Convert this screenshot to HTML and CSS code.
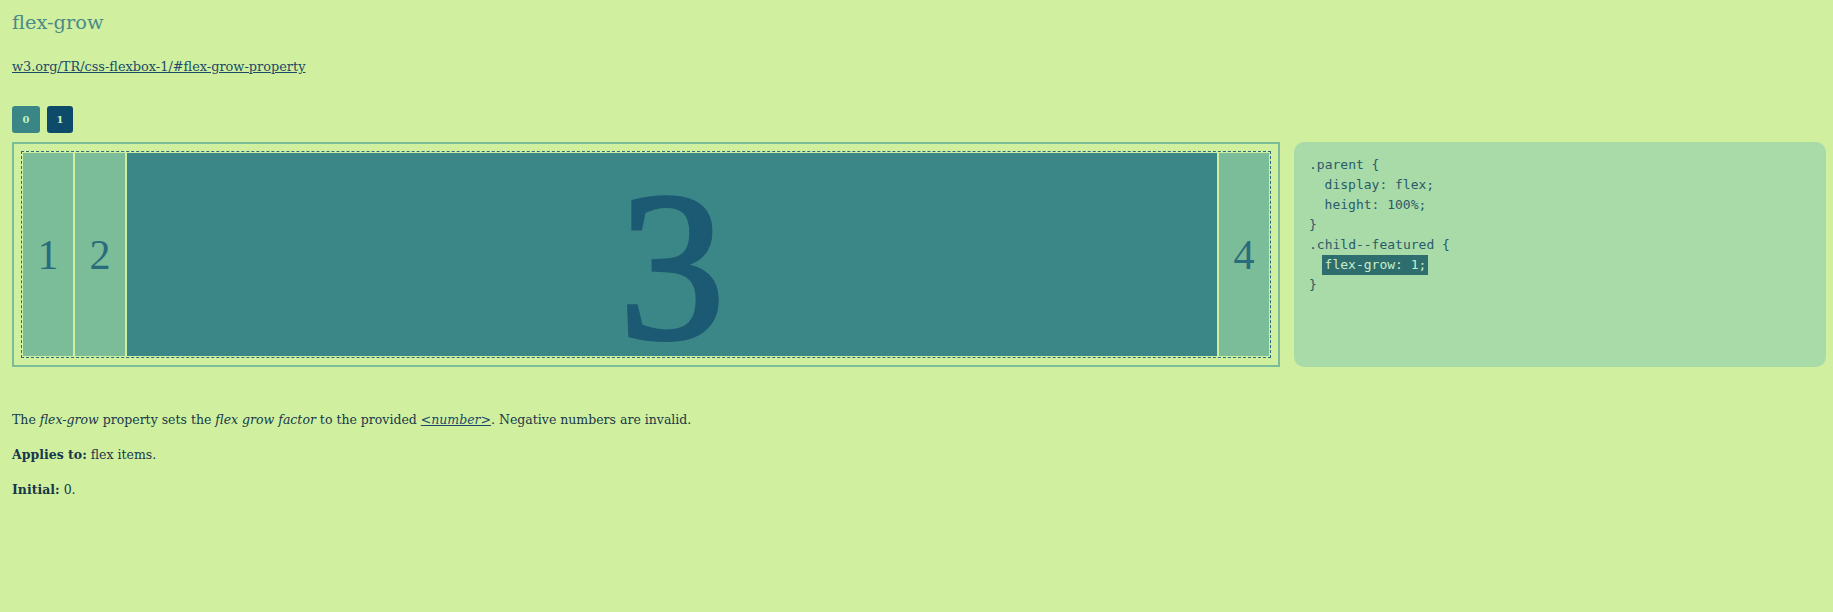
FILE: index.html
```html
<!DOCTYPE html>
<html lang="en">
<head>
<meta charset="utf-8">
<title>flex-grow</title>
<link rel="stylesheet" href="styles.css">
</head>
<body>
<h1 class="title">flex-grow</h1>
<p class="spec"><a href="#">w3.org/TR/css-flexbox-1/#flex-grow-property</a></p>
<div class="buttons">
  <button class="btn btn-off">0</button>
  <button class="btn btn-on">1</button>
</div>
<div class="row">
  <div class="demo">
    <div class="parent">
      <div class="child"><span class="num">1</span></div>
      <div class="child"><span class="num">2</span></div>
      <div class="child child--featured"><span class="num num-big">3</span></div>
      <div class="child"><span class="num">4</span></div>
    </div>
  </div>
  <div class="code">
    <div class="line">.parent {</div>
    <div class="line indent">display: flex;</div>
    <div class="line indent">height: 100%;</div>
    <div class="line">}</div>
    <div class="line">.child--featured {</div>
    <div class="line indent"><span class="hl">flex-grow: 1;</span></div>
    <div class="line">}</div>
  </div>
</div>
<p class="desc desc-first">The <em>flex-grow</em> property sets the <em>flex grow factor</em> to the provided <a href="#"><em>&lt;number&gt;</em></a>. Negative numbers are invalid.</p>
<p class="desc"><strong>Applies to:</strong> flex items.</p>
<p class="desc"><strong>Initial:</strong> 0.</p>
</body>
</html>
```

FILE: styles.css
```css
html, body {
  margin: 0;
  background: #d0f0a0;
}
body {
  padding: 0 7px 0 12px;
  font-family: "DejaVu Serif", "Liberation Serif", serif;
  color: #17384a;
}
.title {
  margin: 9px 0 0;
  font-size: 19.4px;
  line-height: 28px;
  font-weight: normal;
  color: #4a8a88;
}
.spec {
  margin: 20px 0 0;
  font-size: 12.9px;
  line-height: 20px;
}
a {
  color: #1b4a68;
}
.buttons {
  margin-top: 29px;
  display: flex;
  gap: 7px;
}
.btn {
  width: 28px;
  height: 27px;
  border: 0;
  border-radius: 3px;
  font-family: "DejaVu Serif", serif;
  font-size: 10px;
  font-weight: bold;
  color: #c8f0c0;
  padding: 0;
}
.btn-off { background: #3a8585; }
.btn-on { background: #0e4a6a; width: 26px; }
.row {
  margin-top: 9px;
  display: flex;
  gap: 14px;
  height: 225px;
}
.demo {
  flex: 1;
  box-sizing: border-box;
  border: 2px solid #7bbd98;
  padding: 7px;
}
.parent {
  display: flex;
  height: 100%;
  box-sizing: border-box;
  border: 1px dashed #2a6b7c;
}
.child {
  width: 50px;
  margin: 1px;
  background: #7bbd98;
  display: flex;
  align-items: center;
  justify-content: center;
}
.child--featured {
  flex-grow: 1;
  background: #3b8686;
}
.num {
  font-family: "Liberation Serif", serif;
  font-size: 42px;
  line-height: 1;
  color: #2a6b7c;
}
.num-big {
  font-size: 212px;
  color: #1b5a72;
  padding-top: 24px;
  -webkit-text-stroke: 4px #1b5a72;
}
.code {
  width: 532px;
  box-sizing: border-box;
  padding: 13px 15px;
  background: #a8dba8;
  border-radius: 10px;
  font-family: "DejaVu Sans Mono", monospace;
  font-size: 13px;
  line-height: 20px;
  color: #2a5a6a;
}
.line {
  white-space: pre;
  height: 20px;
}
.indent {
  padding-left: 15.6px;
}
.hl {
  display: inline-block;
  background: #2e6e6e;
  color: #c8eec8;
  padding: 0 2px 0 3px;
  margin-left: -3px;
}
.desc {
  margin: 15px 0 0;
  font-size: 12.5px;
  line-height: 20px;
}
.desc-first {
  margin-top: 43px;
}
```
